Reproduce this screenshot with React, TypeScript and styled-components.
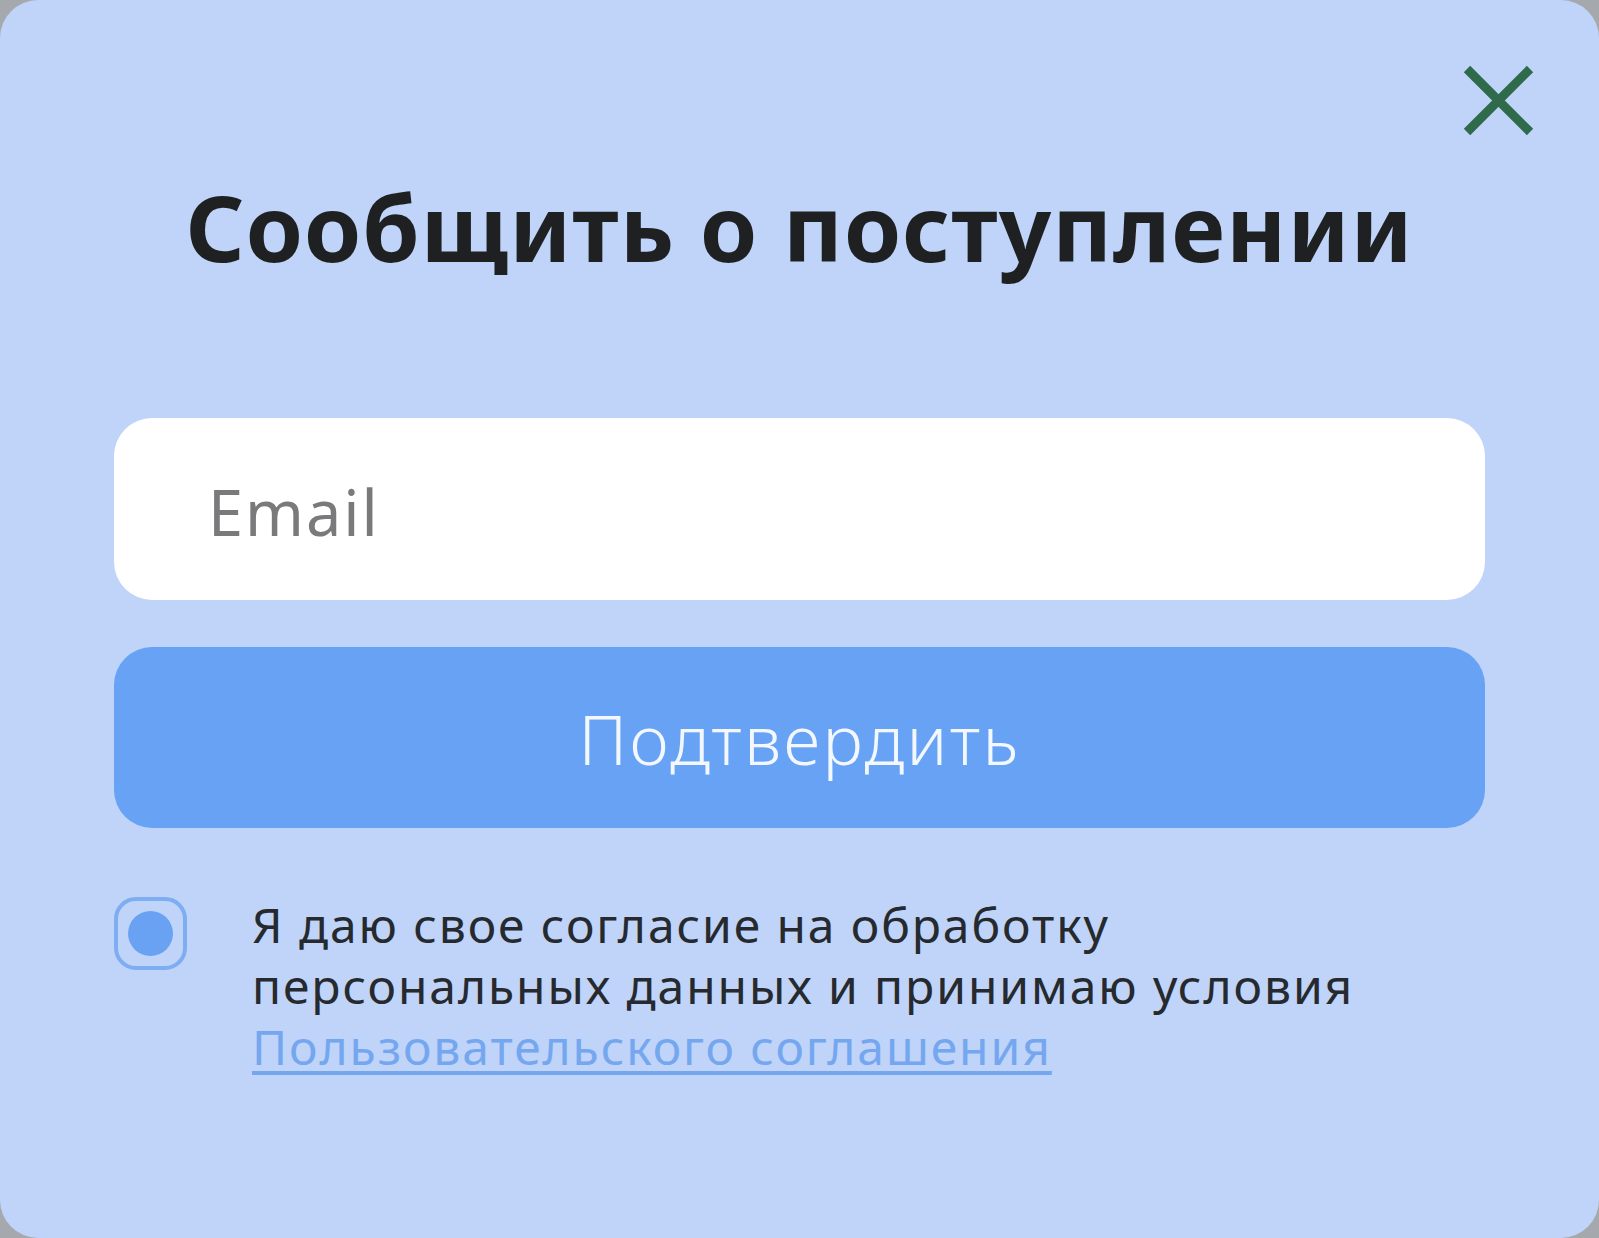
import React from "react";
import styled, { createGlobalStyle } from "styled-components";

const GlobalStyle = createGlobalStyle`
  html, body {
    margin: 0;
    padding: 0;
    background: #a5a9ad;
  }
  * { box-sizing: border-box; }
`;

const Card = styled.div`
  position: relative;
  width: 1599px;
  height: 1238px;
  border-radius: 38px;
  background: #bfd4f8;
  padding: 0 114px;
  display: flex;
  flex-direction: column;
  font-family: "Noto Sans", "Open Sans", sans-serif;
`;

const CloseButton = styled.button`
  position: absolute;
  top: 64px;
  right: 64px;
  width: 74px;
  height: 74px;
  padding: 0;
  border: none;
  background: transparent;
  cursor: pointer;
  display: flex;
  align-items: center;
  justify-content: center;
`;

const Title = styled.h1`
  margin: 176px 0 0;
  font-size: 92px;
  line-height: 1.1;
  font-weight: 700;
  color: #1e2022;
  text-align: center;
  letter-spacing: 1px;
`;

const Form = styled.form`
  margin-top: 141px;
  display: flex;
  flex-direction: column;
  gap: 47px;
`;

const EmailInput = styled.input`
  height: 182px;
  width: 100%;
  border: none;
  border-radius: 38px;
  background: #ffffff;
  padding: 4px 0 0 94px;
  font-family: inherit;
  font-size: 63px;
  letter-spacing: 2px;
  color: #333;
  outline: none;
  &::placeholder {
    color: #7a7a7c;
  }
`;

const SubmitButton = styled.button`
  height: 181px;
  width: 100%;
  border: none;
  border-radius: 38px;
  background: #68a2f5;
  color: #f3f8ff;
  font-family: inherit;
  font-size: 68px;
  font-weight: 300;
  letter-spacing: 2.3px;
  padding-top: 2px;
  cursor: pointer;
`;

const Consent = styled.label`
  margin-top: 69px;
  display: flex;
  align-items: flex-start;
  gap: 65px;
  cursor: pointer;
`;

const Check = styled.span`
  flex: none;
  width: 73px;
  height: 73px;
  border: 4px solid #7eadf2;
  border-radius: 22px;
  display: flex;
  align-items: center;
  justify-content: center;
  &::after {
    content: "";
    width: 45px;
    height: 45px;
    border-radius: 50%;
    background: #6aa2f3;
  }
`;

const ConsentText = styled.span`
  font-size: 48px;
  line-height: 61px;
  letter-spacing: 1.9px;
  color: #262a2f;
  margin-top: -3px;
`;

const TermsLink = styled.a`
  color: #74a7ef;
  text-decoration: underline;
  text-decoration-thickness: 4px;
  text-underline-offset: 6px;
`;

export default function App() {
  return (
    <>
      <GlobalStyle />
      <Card>
        <CloseButton type="button" aria-label="Закрыть">
          <svg width="74" height="74" viewBox="0 0 74 74">
            <path
              d="M6 5 L69 68 M69 5 L6 68"
              stroke="#2f6b4b"
              strokeWidth="9"
              strokeLinecap="butt"
            />
          </svg>
        </CloseButton>
        <Title>Сообщить о поступлении</Title>
        <Form onSubmit={(e) => e.preventDefault()}>
          <EmailInput type="email" placeholder="Email" />
          <SubmitButton type="submit">Подтвердить</SubmitButton>
        </Form>
        <Consent>
          <Check />
          <ConsentText>
            Я даю свое согласие на обработку
            <br />
            персональных данных и принимаю условия
            <br />
            <TermsLink href="#">Пользовательского соглашения</TermsLink>
          </ConsentText>
        </Consent>
      </Card>
    </>
  );
}
